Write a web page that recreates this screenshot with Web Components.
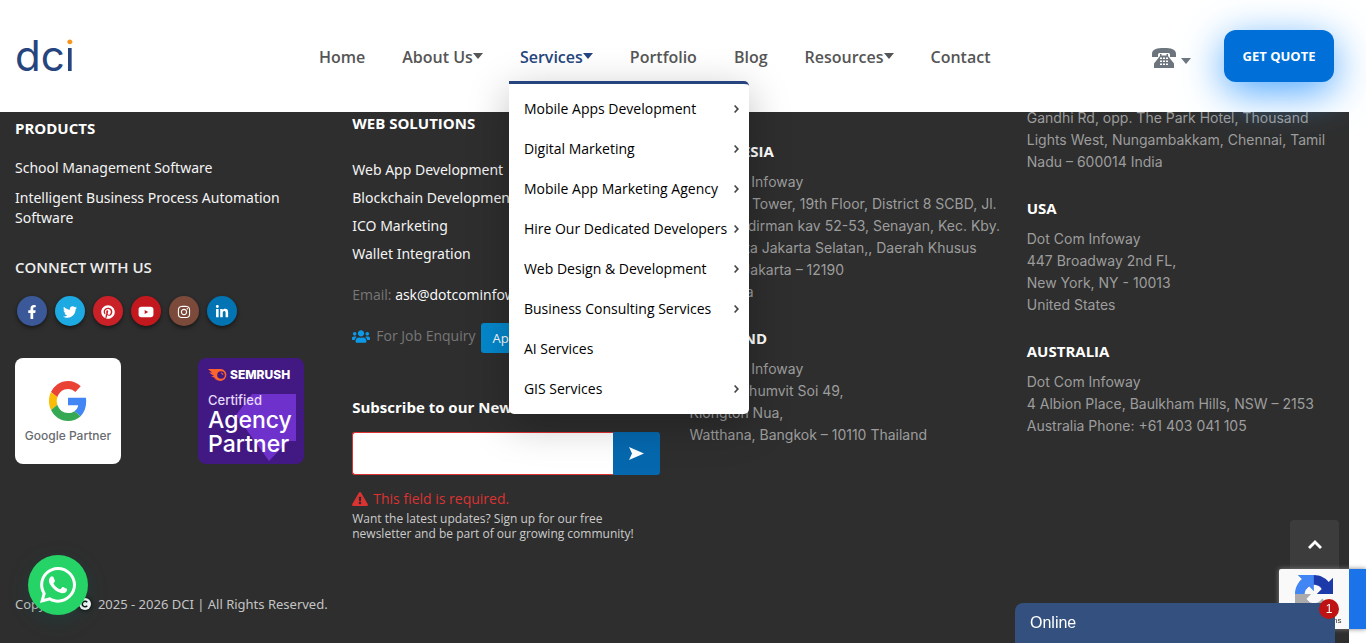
<!DOCTYPE html>
<html lang="en">
<head>
<meta charset="utf-8">
<meta name="viewport" content="width=device-width, initial-scale=1">
<title>DCI – Dot Com Infoway</title>
<style>
  :root {
    --navy: #26457e;
    --dark: #2e2e2e;
    --grey: #9d9d9d;
  }
  body {
    margin: 0;
    background: #fff;
    font: 400 15px/20px "Open Sans", "Noto Sans", sans-serif;
  }
</style>
</head>
<body>
<dci-page>
  <dci-header slot="header">
    <dci-nav-item label="Home"></dci-nav-item>
    <dci-nav-item label="About Us" caret></dci-nav-item>
    <dci-nav-item label="Services" caret active>
      <dci-menu-row more>Mobile Apps Development</dci-menu-row>
      <dci-menu-row more>Digital Marketing</dci-menu-row>
      <dci-menu-row more>Mobile App Marketing Agency</dci-menu-row>
      <dci-menu-row more>Hire Our Dedicated Developers</dci-menu-row>
      <dci-menu-row more>Web Design &amp; Development</dci-menu-row>
      <dci-menu-row more>Business Consulting Services</dci-menu-row>
      <dci-menu-row>AI Services</dci-menu-row>
      <dci-menu-row more>GIS Services</dci-menu-row>
    </dci-nav-item>
    <dci-nav-item label="Portfolio"></dci-nav-item>
    <dci-nav-item label="Blog"></dci-nav-item>
    <dci-nav-item label="Resources" caret></dci-nav-item>
    <dci-nav-item label="Contact"></dci-nav-item>
  </dci-header>
  <dci-footer>
    <dci-products></dci-products>
    <dci-solutions></dci-solutions>
    <div class="asia">
      <dci-office name="INDONESIA">Dot Com Infoway<br>Treasury Tower, 19th Floor, District 8 SCBD, Jl.<br>Jend. Sudirman kav 52-53, Senayan, Kec. Kby.<br>Baru, Kota Jakarta Selatan,, Daerah Khusus<br>Ibukota Jakarta – 12190<br>Indonesia</dci-office>
      <dci-office name="THAILAND">Dot Com Infoway<br>55/8 Sukhumvit Soi 49,<br>Klongton Nua,<br>Watthana, Bangkok – 10110 Thailand</dci-office>
    </div>
    <div class="world">
      <dci-office>Gandhi Rd, opp. The Park Hotel, Thousand<br>Lights West, Nungambakkam, Chennai, Tamil<br>Nadu – 600014 India</dci-office>
      <dci-office name="USA">Dot Com Infoway<br>447 Broadway 2nd FL,<br>New York, NY - 10013<br>United States</dci-office>
      <dci-office name="AUSTRALIA">Dot Com Infoway<br>4 Albion Place, Baulkham Hills, NSW – 2153<br>Australia Phone: +61 403 041 105</dci-office>
    </div>
  </dci-footer>
</dci-page>
<dci-whatsapp></dci-whatsapp>
<dci-to-top></dci-to-top>
<dci-recaptcha></dci-recaptcha>
<dci-chat count="1">Online</dci-chat>

<script>
const ICONS = {
  facebook: ['0 0 320 512', 'M279 288l14-93h-89v-60c0-25 12-50 52-50h41V7s-37-7-72-7c-73 0-121 44-121 125v70H23v93h81v224h100V288z'],
  twitter: ['0 0 512 512', 'M459 152c.3 4.500.3 9 .3 13.600 0 138.700-105.600 298.600-298.600 298.600-59.500 0-114.700-17.200-161.100-47.100 8.400 1 16.600 1.300 25.300 1.300 49 0 94.200-16.600 130.300-44.800-46.100-1-84.800-31.200-98.100-72.800 6.500 1 13 1.600 19.800 1.600 9.400 0 18.800-1.300 27.600-3.600-48.100-9.700-84.100-52-84.100-103v-1.300c14 7.800 30.200 12.700 47.400 13.300-28.300-18.800-46.800-51-46.800-87.400 0-19.500 5.200-37.400 14.300-53 51.700 63.700 129.300 105.300 216.400 109.800-1.600-7.800-2.600-15.900-2.600-24 0-57.800 46.800-104.900 104.900-104.900 30.200 0 57.500 12.700 76.700 33.100 23.700-4.500 46.500-13.300 66.600-25.300-7.800 24.400-24.400 44.800-46.100 57.800 21.100-2.300 41.600-8.100 60.400-16.200-14.300 20.800-32.200 39.300-52.600 54.300z'],
  pinterest: ['0 0 496 512', 'M496 256c0 137-111 248-248 248-25.600 0-50.200-3.900-73.400-11.100 10.100-16.500 25.200-43.500 30.800-65 3-11.600 15.400-59 15.400-59 8.100 15.400 31.700 28.500 56.800 28.500 74.800 0 128.700-68.800 128.700-154.300 0-81.900-66.900-143.200-152.900-143.200-107 0-163.900 71.800-163.900 150.100 0 36.400 19.400 81.700 50.300 96.100 4.700 2.200 7.200 1.200 8.300-3.300.8-3.400 5-20.300 6.900-28.100.6-2.500.3-4.700-1.700-7.100-10.100-12.500-18.300-35.300-18.300-56.600 0-54.700 41.400-107.600 112-107.600 60.900 0 103.600 41.500 103.600 100.900 0 67.100-33.900 113.600-78 113.600-24.300 0-42.600-20.100-36.700-44.800 7-29.500 20.500-61.300 20.500-82.600 0-19-10.200-34.900-31.400-34.900-24.900 0-44.900 25.700-44.900 60.200 0 22 7.400 36.800 7.400 36.800s-24.500 103.800-29 123.200c-5 21.400-3 51.600-.9 71.200C65.400 450.900 0 361.100 0 256 0 119 111 8 248 8s248 111 248 248z'],
  youtube: ['0 0 576 512', 'M120 64h336c66 0 104 34 104 100v184c0 66-38 100-104 100H120C54 448 16 414 16 348V164C16 98 54 64 120 64zm120 116v152l130-76z'],
  instagram: ['0 0 448 512', 'M224.100 141c-63.600 0-114.900 51.300-114.900 114.900s51.300 114.900 114.900 114.900S339 319.500 339 255.900 287.700 141 224.100 141zm0 189.600c-41.100 0-74.700-33.500-74.700-74.700s33.500-74.700 74.700-74.700 74.700 33.500 74.700 74.700-33.600 74.700-74.700 74.700zm146.400-194.300c0 14.900-12 26.800-26.800 26.800-14.900 0-26.800-12-26.800-26.800s12-26.800 26.800-26.800 26.800 12 26.800 26.800zm76.100 27.200c-1.700-35.900-9.900-67.700-36.200-93.900-26.200-26.200-58-34.400-93.900-36.200-37-2.100-147.900-2.100-184.900 0-35.800 1.700-67.600 9.900-93.900 36.100s-34.400 58-36.200 93.900c-2.100 37-2.100 147.900 0 184.900 1.700 35.900 9.900 67.700 36.200 93.900s58 34.400 93.900 36.200c37 2.100 147.900 2.100 184.900 0 35.900-1.700 67.700-9.900 93.900-36.200 26.200-26.200 34.400-58 36.200-93.900 2.100-37 2.100-147.800 0-184.800zM398.800 388c-7.800 19.600-22.900 34.700-42.600 42.600-29.500 11.700-99.500 9-132.100 9s-102.700 2.600-132.100-9c-19.600-7.800-34.700-22.900-42.600-42.600-11.700-29.500-9-99.500-9-132.100s-2.600-102.700 9-132.100c7.800-19.600 22.900-34.700 42.600-42.600 29.500-11.700 99.500-9 132.100-9s102.700-2.600 132.100 9c19.600 7.800 34.700 22.900 42.600 42.600 11.700 29.500 9 99.500 9 132.100s2.700 102.700-9 132.100z'],
  linkedin: ['0 0 448 512', 'M100.300 448H7.400V148.900h92.900zM53.800 108.100C24.100 108.100 0 83.500 0 53.800a53.800 53.800 0 0 1 107.600 0c0 29.700-24.100 54.300-53.800 54.300zM447.900 448h-92.700V302.400c0-34.700-.7-79.200-48.300-79.200-48.300 0-55.700 37.700-55.700 76.700V448h-92.800V148.900h89.100v40.800h1.300c12.400-23.500 42.700-48.300 87.900-48.300 94 0 111.300 61.900 111.300 142.300V448z'],
  users: ['0 0 640 512', 'M96 224c35.300 0 64-28.700 64-64s-28.700-64-64-64-64 28.700-64 64 28.700 64 64 64zm448 0c35.300 0 64-28.700 64-64s-28.700-64-64-64-64 28.700-64 64 28.700 64 64 64zm32 32h-64c-17.600 0-33.500 7.100-45.100 18.600 40.300 22.100 68.900 62 75.100 109.400h66c17.700 0 32-14.300 32-32v-32c0-35.300-28.700-64-64-64zm-256 0c61.900 0 112-50.100 112-112S381.900 32 320 32 208 82.100 208 144s50.100 112 112 112zm76.800 32h-8.300c-20.800 10-43.900 16-68.500 16s-47.600-6-68.500-16h-8.300C179.600 288 128 339.600 128 403.200V432c0 26.500 21.500 48 48 48h288c26.500 0 48-21.500 48-48v-28.800c0-63.600-51.600-115.200-115.200-115.200zm-223.700-13.400C161.500 263.100 145.600 256 128 256H64c-35.300 0-64 28.700-64 64v32c0 17.700 14.300 32 32 32h65.900c6.300-47.400 34.900-87.300 75.200-109.400z'],
  warning: ['0 0 576 512', 'M569.500 440c18.500 32-4.700 72-41.600 72H48c-36.900 0-60-40.100-41.600-72L246.400 24c18.500-32 64.700-32 83.200 0l239.900 416zM288 354c-25.400 0-46 20.600-46 46s20.600 46 46 46 46-20.600 46-46-20.600-46-46-46zm-43.700-165.300l7.400 136c.3 6.400 5.600 11.300 12 11.300h48.500c6.400 0 11.600-5 12-11.300l7.400-136c.4-6.900-5.100-12.700-12-12.700h-63.400c-6.900 0-12.400 5.800-12 12.700z'],
  whatsapp: ['0 0 448 512', 'M380.900 97.100C339 55.100 283.200 32 223.900 32c-122.400 0-222 99.600-222 222 0 39.100 10.200 77.300 29.600 111L0 480l117.700-30.900c32.400 17.700 68.900 27 106.100 27h.1c122.300 0 224.100-99.600 224.100-222 0-59.300-25.200-115-67.100-157zm-157 341.600c-33.200 0-65.700-8.900-94-25.700l-6.700-4-69.800 18.300L72 359.200l-4.400-7c-18.500-29.400-28.200-63.300-28.200-98.200 0-101.700 82.800-184.500 184.600-184.500 49.300 0 95.600 19.200 130.400 54.100 34.800 34.900 56.200 81.200 56.100 130.500 0 101.800-84.900 184.600-186.600 184.600z'],
  send: ['0 0 15 13', 'M0 0l15 6.500L0 13l3-6.500z'],
  caret: ['0 0 10 6', 'M0 0h10L5 6z'],
  right: ['0 0 5 8', 'M1.200 0L5 4 1.200 8 0 7l2.800-3L0 1z'],
  up: ['0 0 14 9', 'M7 0l7 7-2 2-5-5-5 5-2-2z'],
  phone: ['0 0 24 20', 'M12 0C5 0 0 1 0 6v3h6V6.500C6 5.500 7 5 8 5h8c1 0 2 .5 2 1.500V9h6V6c0-5-5-6-12-6zM8 6v2L2 15.500V20h20v-4.500L16 8V6h-1.500v1.500h-5V6zM8 9.500h2V11H8zm3 0h2V11h-2zm3 0h2V11h-2zM8 12.500h2V14H8zm3 0h2V14h-2zm3 0h2V14h-2zM8 15.500h2V17H8zm3 0h2V17h-2zm3 0h2V17h-2z']
};

function define(tag, markup) {
  customElements.define(tag, class extends HTMLElement {
    connectedCallback() {
      if (this.shadowRoot) return;
      const template = document.createElement('template');
      template.innerHTML = typeof markup === 'function' ? markup(this) : markup;
      this.attachShadow({ mode: 'open' }).append(template.content.cloneNode(true));
    }
  });
}

define('dci-icon', el => {
  const [box, path] = ICONS[el.getAttribute('name')];
  return `<style>
    :host { display: inline-block; flex: none; }
    svg { display: block; width: 100%; height: 100%; fill: currentColor; }
  </style><svg viewBox="${box}" aria-hidden="true"><path fill-rule="evenodd" d="${path}"/></svg>`;
});

define('dci-page', `<style>
  :host { display: flex; flex-direction: column; min-height: 100vh; margin-right: 17px; }
</style><slot name="header"></slot><slot></slot>`);

define('dci-header', `<style>
  :host { display: block; position: sticky; top: 0; z-index: 5; background: #fff; }
  header { display: grid; grid-template-columns: 304px auto 1fr; align-items: center; height: 112px; padding: 0 15px; }
  .logo { font: 400 42px/50px Inter, sans-serif; color: var(--navy); text-decoration: none; }
  .logo span { color: transparent; background: linear-gradient(#f7941d 16px, var(--navy) 16px); -webkit-background-clip: text; background-clip: text; }
  nav { display: flex; gap: 37px; margin-top: 2px; }
  .tools { display: flex; justify-content: flex-end; align-items: center; }
  .call { display: flex; align-items: center; gap: 5px; border: 0; padding: 4px 0 0; background: none; color: #6c757d; }
  .call .phone { width: 24px; height: 20px; }
  .call .caret { width: 10px; height: 6px; margin-top: 6px; }
  .quote { width: 110px; height: 52px; margin-left: 33px; border: 0; border-radius: 12px; padding: 0; background: #0070d8; color: #fff;
    font: 700 13px/20px "Open Sans", sans-serif; box-shadow: 0 10px 40px #4da6ff; }
</style>
<header>
  <a class="logo" href="#">dc<span>i</span></a>
  <nav><slot></slot></nav>
  <div class="tools">
    <button class="call" aria-label="Call us"><dci-icon class="phone" name="phone"></dci-icon><dci-icon class="caret" name="caret"></dci-icon></button>
    <button class="quote">GET QUOTE</button>
  </div>
</header>`);

define('dci-nav-item', el => `<style>
  :host { display: block; position: relative; }
  a { display: flex; align-items: center; color: #555; font-weight: 600; font-size: 16px; line-height: 52px; text-decoration: none; }
  :host([active]) a { color: var(--navy); }
  dci-icon { width: 10px; height: 6px; margin-bottom: 2px; }
  .menu { position: absolute; top: 50px; left: -11px; width: 240px; box-sizing: border-box; padding: 5px 0; background: #fff;
    border-top: 3px solid var(--navy); border-radius: 0 5px 5px 5px; box-shadow: 0 10px 40px rgba(0,0,0,.25); }
</style>
<a href="#">${el.getAttribute('label')}${el.hasAttribute('caret') ? '<dci-icon name="caret"></dci-icon>' : ''}</a>
${el.hasAttribute('active') ? '<div class="menu"><slot></slot></div>' : ''}`);

define('dci-menu-row', el => `<style>
  :host { display: block; }
  a { display: flex; align-items: center; justify-content: space-between; padding: 0 10px 0 15px; color: #000; font-size: 14px; line-height: 40px; text-decoration: none; white-space: nowrap; }
  dci-icon { width: 5px; height: 8px; color: #444; }
</style><a href="#"><span><slot></slot></span>${el.hasAttribute('more') ? '<dci-icon name="right"></dci-icon>' : ''}</a>`);

define('dci-footer', `<style>
  :host { display: flex; flex-direction: column; flex: 1; margin-top: -8px; background: var(--dark); color: var(--grey); }
  .columns { display: grid; grid-template-columns: repeat(4, 1fr); flex: 1; }
  ::slotted(*) { padding: 0 15px; min-width: 0; }
  ::slotted(dci-products) { padding-top: 14px; }
  ::slotted(dci-solutions) { padding-top: 9px; }
  ::slotted(.asia) { padding-top: 37px; }
  ::slotted(.world) { padding-top: 3px; }
  .legal { display: flex; align-items: center; gap: 6px; margin: 0; padding: 10px 15px 29px; color: #c4c4c4; font: 400 13px/20px "Noto Sans", sans-serif; }
  svg { width: 14px; height: 14px; margin-left: -3px; filter: drop-shadow(0 0 2px #000); }
</style>
<div class="columns"><slot></slot></div>
<p class="legal"><span>Copyright</span>
  <svg viewBox="0 0 14 14" aria-hidden="true"><circle cx="7" cy="7" r="6" fill="#fff"/><path d="M9.200 5.200A2.800 2.800 0 1 0 9.200 8.800" fill="none" stroke="#111" stroke-width="1.600"/></svg>
  <span>2025 - 2026 DCI | All Rights Reserved.</span></p>`);

define('dci-office', el => `<style>
  :host { display: block; line-height: 22px; margin-bottom: 25px; white-space: nowrap; }
  h4 { margin: 0 0 10px; color: #fff; font-size: 15px; font-weight: 700; line-height: 20px; }
  address { font: 400 14px/22px Inter, sans-serif; }
</style>${el.hasAttribute('name') ? `<h4>${el.getAttribute('name')}</h4>` : ''}<address><slot></slot></address>`);

define('dci-products', `<style>
  :host { display: block; }
  h4 { margin: 0; color: #fff; font-size: 15px; line-height: 20px; }
  h4.light { font-weight: 600; color: #eee; }
  ul { display: flex; flex-direction: column; gap: 10px; margin: 20px 0 29px; padding: 0; list-style: none; font: 400 14px/20px "Noto Sans", sans-serif; }
  a { color: #f4f4f4; text-decoration: none; }
  .social { display: flex; gap: 8px; margin: 19px 0 32px; padding-left: 2px; }
  .badges { display: grid; grid-template-columns: 106px 106px; column-gap: 77px; }
</style>
<h4>PRODUCTS</h4>
<ul><li><a href="#">School Management Software</a></li><li><a href="#">Intelligent Business Process Automation Software</a></li></ul>
<h4 class="light">CONNECT WITH US</h4>
<div class="social">
  <dci-social name="facebook" label="Facebook" color="#3b5998"></dci-social>
  <dci-social name="twitter" label="Twitter" color="#1da9e1"></dci-social>
  <dci-social name="pinterest" label="Pinterest" color="#ca2128"></dci-social>
  <dci-social name="youtube" label="YouTube" color="#c3181e"></dci-social>
  <dci-social name="instagram" label="Instagram" color="#7c4a3a"></dci-social>
  <dci-social name="linkedin" label="LinkedIn" color="#0274b3"></dci-social>
</div>
<div class="badges"><dci-google-badge></dci-google-badge><dci-semrush-badge></dci-semrush-badge></div>`);

define('dci-social', el => `<style>
  :host { display: block; }
  a { display: flex; align-items: center; justify-content: center; width: 30px; height: 30px; border-radius: 50%; color: #fff;
    background: ${el.getAttribute('color')}; box-shadow: 0 2px 4px rgba(0,0,0,.5); }
  dci-icon { width: 14px; height: 14px; margin-top: 2px; }
  dci-icon[name=youtube] { width: 16px; }
</style><a href="#" aria-label="${el.getAttribute('label')}"><dci-icon name="${el.getAttribute('name')}"></dci-icon></a>`);

define('dci-google-badge', `<style>
  :host { display: flex; flex-direction: column; align-items: center; height: 106px; border-radius: 8px; background: #fff; color: #686b70; }
  svg { width: 38px; height: 40px; margin-top: 23px; }
  span { margin-top: 5px; font: 500 12px/20px Inter, sans-serif; white-space: nowrap; }
</style>
<svg viewBox="0 0 48 48" preserveAspectRatio="none" aria-hidden="true">
  <path fill="#EA4335" d="M24 9.500c3.540 0 6.710 1.220 9.210 3.600l6.850-6.850C35.900 2.380 30.470 0 24 0 14.620 0 6.510 5.380 2.560 13.220l7.980 6.190C12.430 13.720 17.740 9.500 24 9.500z"/>
  <path fill="#4285F4" d="M46.980 24.550c0-1.570-.15-3.090-.38-4.550H24v9.020h12.940c-.58 2.960-2.260 5.480-4.780 7.180l7.730 6c4.510-4.180 7.090-10.360 7.090-17.650z"/>
  <path fill="#FBBC05" d="M10.530 28.590c-.48-1.450-.76-2.990-.76-4.590s.27-3.140.76-4.590l-7.980-6.190C.92 16.460 0 20.120 0 24c0 3.880.92 7.540 2.560 10.780l7.970-6.190z"/>
  <path fill="#34A853" d="M24 48c6.480 0 11.930-2.130 15.890-5.810l-7.730-6c-2.150 1.450-4.920 2.300-8.160 2.300-6.260 0-11.570-4.220-13.470-9.910l-7.980 6.190C6.510 42.620 14.620 48 24 48z"/>
</svg><span>Google Partner</span>`);

define('dci-semrush-badge', `<style>
  :host { display: block; height: 106px; box-sizing: border-box; padding: 9px 0 0 10px; border-radius: 8px; color: #fff;
    background: #421983; position: relative; overflow: hidden; }
  .shape { position: absolute; inset: 0; width: 106px; height: 106px; }
  .copy { position: relative; white-space: nowrap; }
  .brand { display: flex; align-items: center; gap: 3px; font: 800 12px/16px Inter, sans-serif; }
  .brand svg { width: 19px; height: 12px; }
  .small { margin-top: 9px; font: 500 13px/16px Inter, sans-serif; color: #e6d9fa; }
  .big { font: 500 23px/24px Inter, sans-serif; }
</style>
<svg class="shape" viewBox="0 0 106 106" aria-hidden="true"><path fill="#6f31cc" d="M54 36h44v47H90L71 103 38 57z"/></svg>
<div class="copy">
  <div class="brand"><svg viewBox="0 0 19 12" aria-hidden="true"><path fill="#ff642d" d="M0 0h13a6 6 0 1 1-3 11.500L6 9.500h2L3 7h3L1 3.500h3z"/><circle cx="13" cy="6" r="3.800" fill="#421983"/><path d="M13 4a2 2 0 0 1 2 2" fill="none" stroke="#ff642d"/></svg>SEMRUSH</div>
  <div class="small">Certified</div>
  <div class="big">Agency</div>
  <div class="big">Partner</div>
</div>`);

define('dci-solutions', `<style>
  :host { display: block; font-size: 14px; }
  h4 { margin: 0; color: #fff; font-size: 15px; line-height: 20px; }
  ul { margin: 23px 0 13px; padding: 0; list-style: none; font: 400 14px/28px "Noto Sans", sans-serif; }
  a { color: #f4f4f4; text-decoration: none; }
  p { margin: 0; color: #777; }
  .mail { line-height: 28px; margin-bottom: 14px; }
  .mail a { color: #fff; }
  .job { display: flex; align-items: flex-start; line-height: 26px; white-space: nowrap; }
  .job dci-icon { width: 18px; height: 15px; margin: 6px 6px 0 0; color: #0d99e8; }
  .apply { margin-left: 6px; height: 30px; padding: 0 11px; border: 0; border-radius: 3px; background: #0488cd; color: #fff; font: 400 13px/30px "Open Sans", sans-serif; }
  h3 { margin: 43px 0 14px; color: #fff; font-size: 15px; font-weight: 700; line-height: 22px; white-space: nowrap; }
  form { display: flex; height: 43px; }
  input { flex: 1; min-width: 0; box-sizing: border-box; border: 1px solid #dc3232; border-right: 0; border-radius: 3px 0 0 3px; padding: 0 10px; background: #fff; font: inherit; }
  .send { display: flex; align-items: center; justify-content: center; width: 47px; border: 0; border-radius: 0 3px 3px 0; padding: 0; background: #0568ae; color: #fff; }
  .send dci-icon { width: 15px; height: 13px; }
  .error { display: flex; align-items: center; gap: 5px; margin-top: 13px; color: #dc3232; line-height: 22px; }
  .error dci-icon { width: 16px; height: 14px; }
  .note { color: #ccc; font-size: 12px; line-height: 15px; margin-top: 1px; }
</style>
<h4>WEB SOLUTIONS</h4>
<ul><li><a href="#">Web App Development</a></li><li><a href="#">Blockchain Development</a></li><li><a href="#">ICO Marketing</a></li><li><a href="#">Wallet Integration</a></li></ul>
<p class="mail">Email: <a href="#">ask@dotcominfoway.com</a></p>
<p class="job"><dci-icon name="users"></dci-icon>For Job Enquiry<button class="apply">Apply Now</button></p>
<h3><label for="email">Subscribe to our Newsletter</label></h3>
<form><input id="email" type="email"><button class="send" type="button" aria-label="Subscribe"><dci-icon name="send"></dci-icon></button></form>
<div class="error"><dci-icon name="warning"></dci-icon>This field is required.</div>
<p class="note">Want the latest updates? Sign up for our free<br>newsletter and be part of our growing community!</p>`);

define('dci-whatsapp', `<style>
  :host { position: fixed; z-index: 6; left: 28px; bottom: 28px; }
  a { display: flex; align-items: center; justify-content: center; width: 60px; height: 60px; border-radius: 50%; background: #25d366; box-shadow: 0 6px 20px rgba(7,94,84,.25); }
  svg { width: 36px; height: 36px; fill: #fff; }
</style>
<a href="#" aria-label="WhatsApp"><svg viewBox="0 32 448 448" aria-hidden="true"><path d="${ICONS.whatsapp[1]}"/>
<path d="M325 300c-6-3-33-16-38-18s-9-3-12 3c-4 5-15 18-18 22-3 3-7 4-12 1-33-16-54-29-75-67-6-10 5-9 16-31 2-3 1-7 0-10-2-2-13-30-18-41-4-12-9-10-12-10h-11c-4 0-10 1-15 7-5 5-19 19-19 46s20 53 22 57c3 4 39 60 95 84 36 15 49 16 67 14 11-2 33-14 38-27s5-24 3-26c-1-2-5-3-11-4z"/></svg></a>`);

define('dci-to-top', `<style>
  :host { position: fixed; z-index: 6; right: 27px; bottom: 70px; }
  a { display: flex; align-items: center; justify-content: center; width: 49px; height: 53px; border-radius: 4px 4px 0 0; background: #3c3c3c; color: #fff; }
  dci-icon { width: 14px; height: 9px; margin-bottom: 4px; }
</style><a href="#" aria-label="Back to top"><dci-icon name="up"></dci-icon></a>`);

define('dci-recaptcha', `<style>
  :host { display: flex; position: fixed; z-index: 7; right: 0; bottom: 14px; height: 60px; box-shadow: 0 0 5px #808080; border-radius: 2px 0 0 2px; overflow: hidden; }
  .card { display: flex; flex-direction: column; align-items: center; width: 70px; background: #f9f9f9; }
  svg { width: 38px; height: 38px; margin-top: 6px; }
  span { margin-top: 3px; color: #333; font: 400 8px/10px "Liberation Sans", sans-serif; white-space: nowrap; }
  .info { width: 17px; background: #1a73e8; }
</style>
<div class="card"><svg viewBox="0 0 64 64" aria-hidden="true">
  <path fill="#1c3aa9" d="M64 31.960a33 33 0 0 0-.04-1.370V4.690l-7.160 7.160C50.940 4.670 42.030.09 32.050.09c-10.390 0-19.610 4.960-25.460 12.640l11.740 11.860a15.550 15.550 0 0 1 4.750-5.340c2.050-1.600 4.960-2.910 8.970-2.910.49 0 .86.06 1.130.16 4.970.39 9.280 3.140 11.820 7.120l-8.300 8.310c10.520-.04 22.400-.07 27.300.03"/>
  <path fill="#4285f4" d="M31.860.09a33 33 0 0 0-1.370.04H4.590l7.160 7.160C4.580 13.150 0 22.060 0 32.040c0 10.390 4.960 19.610 12.630 25.460l11.860-11.730a15.550 15.550 0 0 1-5.340-4.760c-1.600-2.050-2.900-4.950-2.900-8.970 0-.48.06-.86.16-1.130.39-4.970 3.140-9.290 7.120-11.820l8.310 8.300c-.04-10.520-.07-22.400.02-27.300"/>
  <path fill="#ababab" d="M0 32.040q0 .69.04 1.380V59.310l7.160-7.160c5.860 7.170 14.770 11.750 24.750 11.750 10.390 0 19.610-4.960 25.460-12.630L45.670 39.410a15.550 15.550 0 0 1-4.750 5.340c-2.050 1.600-4.960 2.900-8.970 2.900-.48 0-.86-.06-1.130-.16-4.970-.39-9.290-3.140-11.820-7.120l8.300-8.310c-10.520.04-22.400.07-27.300-.02"/>
</svg><span>Privacy - Terms</span></div><div class="info"></div>`);

define('dci-chat', el => `<style>
  :host { display: block; position: fixed; z-index: 8; right: 31px; bottom: 0; width: 320px; }
  button { display: block; width: 100%; height: 40px; border: 0; border-radius: 8px 8px 0 0; padding: 0 15px; text-align: left; background: #34507e; color: #fff;
    font: 400 16px/40px "Liberation Sans", sans-serif; }
  .count { position: absolute; top: -4px; right: -4px; width: 20px; height: 20px; border-radius: 50%; background: #bf1212; color: #fff; text-align: center;
    font: 400 12px/20px "Liberation Sans", sans-serif; }
</style><button><slot></slot></button><span class="count">${el.getAttribute('count')}</span>`);
</script>
</body>
</html>
